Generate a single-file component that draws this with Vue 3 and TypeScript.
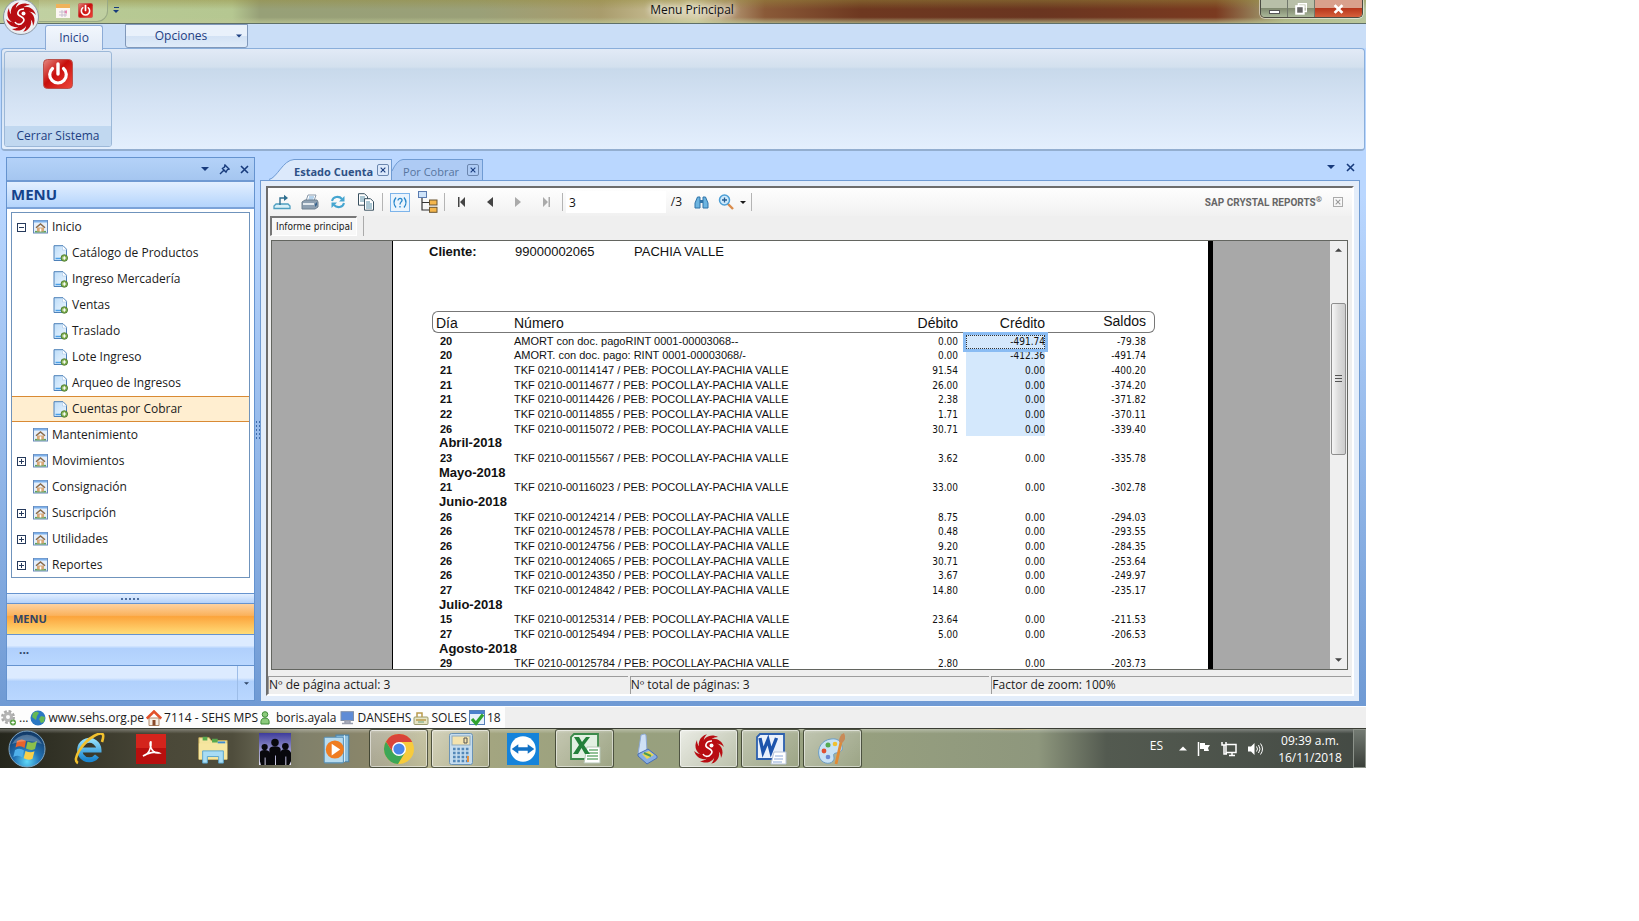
<script setup lang="ts">
import { ref } from 'vue'

interface TreeItem { label: string; child?: boolean; sign?: string; selected?: boolean }
interface Row { month?: string; day?: string; text?: string; debit?: string; credit?: string; balance?: string; sel?: boolean }

const pageNumber = ref('3')

const tree: TreeItem[] = [
  { label: 'Inicio', sign: 'minus' },
  { label: 'Catálogo de Productos', child: true },
  { label: 'Ingreso Mercadería', child: true },
  { label: 'Ventas', child: true },
  { label: 'Traslado', child: true },
  { label: 'Lote Ingreso', child: true },
  { label: 'Arqueo de Ingresos', child: true },
  { label: 'Cuentas por Cobrar', child: true, selected: true },
  { label: 'Mantenimiento' },
  { label: 'Movimientos', sign: 'plus' },
  { label: 'Consignación' },
  { label: 'Suscripción', sign: 'plus' },
  { label: 'Utilidades', sign: 'plus' },
  { label: 'Reportes', sign: 'plus' },
]

const tkf = (n: string) => `TKF 0210-${n} / PEB: POCOLLAY-PACHIA VALLE`
const entry = (day: string, text: string, debit: string, credit: string, balance: string, sel = false): Row =>
  ({ day, text, debit, credit, balance, sel })

const rows: Row[] = [
  entry('20', 'AMORT con doc. pagoRINT 0001-00003068--', '0.00', '-491.74', '-79.38', true),
  entry('20', 'AMORT. con doc. pago: RINT 0001-00003068/-', '0.00', '-412.36', '-491.74', true),
  entry('21', tkf('00114147'), '91.54', '0.00', '-400.20', true),
  entry('21', tkf('00114677'), '26.00', '0.00', '-374.20', true),
  entry('21', tkf('00114426'), '2.38', '0.00', '-371.82', true),
  entry('22', tkf('00114855'), '1.71', '0.00', '-370.11', true),
  entry('26', tkf('00115072'), '30.71', '0.00', '-339.40', true),
  { month: 'Abril-2018' },
  entry('23', tkf('00115567'), '3.62', '0.00', '-335.78'),
  { month: 'Mayo-2018' },
  entry('21', tkf('00116023'), '33.00', '0.00', '-302.78'),
  { month: 'Junio-2018' },
  entry('26', tkf('00124214'), '8.75', '0.00', '-294.03'),
  entry('26', tkf('00124578'), '0.48', '0.00', '-293.55'),
  entry('26', tkf('00124756'), '9.20', '0.00', '-284.35'),
  entry('26', tkf('00124065'), '30.71', '0.00', '-253.64'),
  entry('26', tkf('00124350'), '3.67', '0.00', '-249.97'),
  entry('27', tkf('00124842'), '14.80', '0.00', '-235.17'),
  { month: 'Julio-2018' },
  entry('15', tkf('00125314'), '23.64', '0.00', '-211.53'),
  entry('27', tkf('00125494'), '5.00', '0.00', '-206.53'),
  { month: 'Agosto-2018' },
  entry('29', tkf('00125784'), '2.80', '0.00', '-203.73'),
]

const tasks = [
  { id: 'ie', name: 'Internet Explorer' },
  { id: 'pdf', name: 'Adobe Reader' },
  { id: 'folder', name: 'Explorador' },
  { id: 'people', name: 'Usuarios' },
  { id: 'media', name: 'Reproductor' },
  { id: 'chrome', name: 'Chrome', open: true },
  { id: 'calc', name: 'Calculadora', open: true },
  { id: 'team', name: 'TeamViewer' },
  { id: 'excel', name: 'Excel', open: true },
  { id: 'scan', name: 'Escáner' },
  { id: 'swirl', name: 'Menu Principal', open: true, active: true },
  { id: 'word', name: 'Word', open: true },
  { id: 'paint', name: 'Paint', open: true },
]
</script>

<template>
  <svg class="defs" aria-hidden="true">
    <defs>
      <linearGradient id="gRed" x1="0" y1="0" x2="1" y2="1"><stop offset="0" stop-color="#e58a82" /><stop offset=".45" stop-color="#c80f0c" /><stop offset="1" stop-color="#f0483c" /></linearGradient>
      <radialGradient id="gOrb" cx=".5" cy=".85" r=".8"><stop offset="0" stop-color="#5fd8f8" /><stop offset=".45" stop-color="#2272b4" /><stop offset="1" stop-color="#123a68" /></radialGradient>
      <linearGradient id="gDoc" x1="0" y1="0" x2="1" y2="1"><stop offset="0" stop-color="#bcdcf8" /><stop offset="1" stop-color="#eef7ff" /></linearGradient>
      <linearGradient id="gIe" x1="0" y1="0" x2="0" y2="1"><stop offset="0" stop-color="#8fdcfa" /><stop offset="1" stop-color="#1b86cf" /></linearGradient>
      <linearGradient id="gSky" x1="0" y1="0" x2="0" y2="1"><stop offset="0" stop-color="#3e3c9c" /><stop offset="1" stop-color="#e6e4f6" /></linearGradient>
      <linearGradient id="gFold" x1="0" y1="0" x2="0" y2="1"><stop offset="0" stop-color="#f7e9a8" /><stop offset="1" stop-color="#e8cf72" /></linearGradient>
    </defs>
    <symbol id="swirl" viewBox="-16 -16 32 32">
      <g fill="#b80d12">
        <path v-for="a in [0, 45, 90, 135, 180, 225, 270, 315]" :key="a" :transform="`rotate(${a})`" d="M-7-4C-6-12 2-16 9-12C4-12 0-9 1-5z" />
        <circle r="6.500" />
      </g>
      <path d="M3-8C-3-8-5-3-1-1S5 3 0 7C-3 8-5 7-6 5" fill="none" stroke="#fff" stroke-width="1.600" />
      <circle cx="2.500" cy="-3.500" r="2" fill="#fff" />
    </symbol>
    <symbol id="power" viewBox="0 0 30 30">
      <rect x=".5" y=".5" width="29" height="29" rx="4" fill="url(#gRed)" stroke="#b9514c" />
      <path d="M9.500 9.500a8.300 8.300 0 1 0 11 0" fill="none" stroke="#fff" stroke-width="3.200" stroke-linecap="round" />
      <path d="M15 5v10" stroke="#fff" stroke-width="3.400" stroke-linecap="round" />
    </symbol>
    <symbol id="cal" viewBox="0 0 14 14"><rect width="14" height="14" fill="#fbf6f2" /><rect width="14" height="4" fill="#efb25b" /><path d="M3 8h8M3 11h8M6 6v7M9 6v7" stroke="#c9bfd0" /><path d="M8 8l3-2v4z" fill="#e38" opacity=".5" /></symbol>
    <symbol id="home" viewBox="0 0 15 14"><rect x=".5" y=".5" width="14" height="12.500" fill="#e6effa" stroke="#6688b8" /><path d="M1 1.500h13" stroke="#7db0ea" stroke-width="2" /><path d="M2 11.700h11" stroke="#5fa35f" stroke-width="1.600" /><path d="M4 7.500h7v4H4z" fill="#d9a878" /><path d="M3 7.800L7.500 4 12 7.800" fill="none" stroke="#8a6a4a" stroke-width="1.500" /><path d="M6.700 8.500h1.600v3H6.700z" fill="#fff" /></symbol>
    <symbol id="doc" viewBox="0 0 15 17"><path d="M1 .7h9l3.500 3.500V15.500H1z" fill="url(#gDoc)" stroke="#4d80b8" /><path d="M9.500 1v4h4" fill="#fff" stroke="#a9c8e8" stroke-width=".6" /><path d="M2.500 13.500h6" stroke="#4ba0e8" stroke-width="1.500" /><circle cx="11.300" cy="13" r="3.300" fill="#7fae4e" stroke="#48752a" stroke-width=".8" /><path d="M9.500 13h3.600M11.300 11.200v3.600" stroke="#fff" stroke-width="1.200" /></symbol>
    <symbol id="export" viewBox="0 0 18 16"><path d="M3 10h12l2 2v2.500H1V12z" fill="#d9f0f8" stroke="#4d9ec0" stroke-width="1.300" /><path d="M7 11V4h5" fill="none" stroke="#2f6f90" stroke-width="1.400" /><path d="M11 .8L15 4l-4 3z" fill="#2f6f90" /></symbol>
    <symbol id="print" viewBox="0 0 18 16"><path d="M5 7L7 1h8l-2 6z" fill="#fff" stroke="#8797a8" /><path d="M8 3h5M7.500 5h5" stroke="#6da6d8" /><path d="M1 8l3-2h12l1 2v5l-3 2H1z" fill="#8ea0b2" stroke="#6f8090" /><path d="M2 9h11v2H2z" fill="#e3e9ee" /><path d="M14 10l2-2v3l-2 2z" fill="#38648e" /></symbol>
    <symbol id="refresh" viewBox="0 0 16 14"><path d="M2 6C3 1.500 9 .5 12 4" fill="none" stroke="#45a5d0" stroke-width="2" /><path d="M14.500 1v5.500H9z" fill="#45a5d0" /><path d="M14 8c-1 4.500-7 5.500-10 2" fill="none" stroke="#45a5d0" stroke-width="2" /><path d="M1.500 13V7.500H7z" fill="#45a5d0" /></symbol>
    <symbol id="copy" viewBox="0 0 18 18"><path d="M1.500.7h6l3 3v8.500h-9z" fill="#fff" stroke="#39505f" /><path d="M3 4h5M3 6h6M3 8h6" stroke="#5b90a8" /><path d="M7.500 5.700h6l3 3v8.500h-9z" fill="#fff" stroke="#39505f" /><path d="M9 9h4M9 11h6M9 13h6M9 15h6" stroke="#5b90a8" /></symbol>
    <symbol id="param" viewBox="0 0 20 19"><rect x=".5" y=".5" width="19" height="18" fill="#eaf4fd" stroke="#7db4ea" /><path d="M6 4.500q-4 5 0 10M14 4.500q4 5 0 10M8 7.500C8 4.500 12.500 5 12 7.500 11.700 9 10 9 10 11.500M10 13v1.600" fill="none" stroke="#2787cc" stroke-width="1.300" /></symbol>
    <symbol id="group" viewBox="0 0 20 22"><path d="M4 7v12h8M4 11.500h8" fill="none" stroke="#333" stroke-width="1.200" /><rect x=".5" y=".5" width="8" height="6" fill="#cfe4fa" stroke="#5a7bb0" /><rect x="11.500" y="9" width="7.500" height="5" fill="#f5b64c" stroke="#6b5530" /><rect x="11.500" y="16.300" width="7.500" height="5" fill="#f5b64c" stroke="#6b5530" /></symbol>
    <symbol id="find" viewBox="0 0 15 13"><path d="M1 12V7L3.500 1H6v11zM9 12V1h2.500L14 7v5z" fill="#6cb4e0" stroke="#2f73a8" /><path d="M6 4h3v3H6z" fill="#2f73a8" /></symbol>
    <symbol id="zoom" viewBox="0 0 16 16"><path d="M9.500 9.500L15 15" stroke="#d98b4a" stroke-width="2.400" /><circle cx="6.500" cy="6" r="5" fill="#cfeafc" stroke="#4c9fd6" stroke-width="1.500" /><path d="M4 6h5M6.500 3.500v5" stroke="#265f94" stroke-width="1.300" /></symbol>
    <symbol id="pin" viewBox="0 0 11 11"><path d="M6 1l4 4-1.500.5L7 8 3.500 4.500 5.500 3zM1 10l4-4M3 4l4.500 4.500" fill="none" stroke="#183b7c" stroke-width="1.400" /></symbol>
    <symbol id="x" viewBox="0 0 9 9"><path d="M1 1l7 7M8 1L1 8" stroke="currentColor" stroke-width="1.600" /></symbol>
    <symbol id="down" viewBox="0 0 8 4"><path d="M0 0h8L4 4z" fill="currentColor" /></symbol>

    <symbol id="gear" viewBox="0 0 16 16"><circle cx="7" cy="7" r="5.500" fill="none" stroke="#a9a9a9" stroke-width="3" stroke-dasharray="2.600 1.700" /><circle cx="7" cy="7" r="3.500" fill="none" stroke="#b5b5b5" stroke-width="3" /><circle cx="12" cy="12.500" r="3" fill="#5ba245" /><path d="M10.300 12.500h3.400M12 10.800v3.400" stroke="#fff" /></symbol>
    <symbol id="globe" viewBox="0 0 16 16"><circle cx="8" cy="8" r="7.500" fill="#2a78c4" /><path d="M3 3q4-3 6 0l-2 3-1 4-4-3zM11 6l4 1-1 5-3 1-2-4z" fill="#65b854" /></symbol>
    <symbol id="house" viewBox="0 0 16 16"><path d="M3 8h10v7.500H3z" fill="#f6efe6" stroke="#b08868" /><path d="M.8 8.500L8 1.500l7.200 7" fill="none" stroke="#e2502a" stroke-width="2.600" /><path d="M6.500 10h3v5.500h-3z" fill="#8a4b2b" /></symbol>
    <symbol id="user" viewBox="0 0 10 14"><circle cx="5" cy="3.500" r="2.800" fill="#8ccb7c" stroke="#3f8a36" /><path d="M1 13q-1-6 4-6t4 6z" fill="#8ccb7c" stroke="#3f8a36" /></symbol>
    <symbol id="pc" viewBox="0 0 15 14"><rect x="1" y=".7" width="12.500" height="8.800" fill="#5f8cd6" stroke="#8090a8" /><path d="M5 10h5v2H5zM2 12.500h11" stroke="#9a9fae" fill="#c8ccd6" stroke-width="1.500" /></symbol>
    <symbol id="cash" viewBox="0 0 16 14"><rect x="1" y="6" width="14" height="7.500" rx="1" fill="#e6e5c4" stroke="#9b9a6c" /><path d="M4 6V2h5v4M3 9h10" fill="none" stroke="#b99b4c" stroke-width="1.500" /><path d="M5 11h6" stroke="#6ca07c" /></symbol>
    <symbol id="date" viewBox="0 0 16 16"><rect x=".5" y=".5" width="15" height="14" fill="#e6f0fb" stroke="#5580b8" /><path d="M1 2.500h14" stroke="#4a80cc" stroke-width="3" /><path d="M3 9l4 4.500 7-9" fill="none" stroke="#2fa32f" stroke-width="3.200" /></symbol>

    <symbol id="orb" viewBox="0 0 38 38"><circle cx="19" cy="19" r="18" fill="url(#gOrb)" stroke="#7fa6c4" /><path d="M9 11q5-3 9 0l-1.500 7q-4-3-9-.5z" fill="#e8632c" /><path d="M19.500 11.500q5 2.500 9.500-.5l-2 8q-4 2-9-.5z" fill="#8cc04b" /><path d="M7 20q5-2.500 9 .5l-1.700 7q-4-3-9-.5z" fill="#4fb0ea" /><path d="M17.500 21q5 2.500 9 .3l-2 7.500q-4 2-8.800-.6z" fill="#f8d04a" /><path d="M4 14a16 14 0 0 1 30 0q-15-6-30 0" fill="#fff" opacity=".25" /></symbol>
    <symbol id="ie" viewBox="0 0 32 32"><path d="M6.500 17h19.500a9.700 9.700 0 1 0-2 6" fill="none" stroke="url(#gIe)" stroke-width="5" /><path d="M5 30C-2 27 10 9 21 3s10 0 8 6" fill="none" stroke="#f2c12e" stroke-width="2.600" /></symbol>
    <symbol id="pdf" viewBox="0 0 32 32"><rect x="1" y="1" width="30" height="30" fill="#b80f0e" /><rect x="1" y="1" width="30" height="14" fill="#d4241c" /><path d="M8 23c5-1 9-8 8-14-2-1-1 12 8 11-4-2-11 0-16 3z" fill="none" stroke="#fff" stroke-width="1.600" /></symbol>
    <symbol id="folder" viewBox="0 0 34 32"><path d="M2 4h11l2 3h17v20H2z" fill="url(#gFold)" stroke="#c9ad58" /><path d="M6 3h5v4H6zM16 5h6v4h-6z" fill="#58a94e" /><path d="M22 8h8v3h-8z" fill="#3d8ad0" /><path d="M2 10h30v17H2z" fill="#f6e6a0" /><path d="M6 31V18h22v13h-5v-7H11v7z" fill="#a8dcf4" stroke="#5aa4cc" /></symbol>
    <symbol id="people" viewBox="0 0 34 34"><rect width="34" height="34" fill="url(#gSky)" /><g fill="#08080c"><circle cx="6" cy="15" r="3.300" /><circle cx="17" cy="10" r="4" /><circle cx="28" cy="14" r="3.500" /><path d="M1 30V21q0-3 5-3t5 3v13H7v-8H6v8H2zM11 34V17q1-3 6-3t6 3v17h-5V24h-1v10zM23 34V20q1-3 5-3t6 4v9l-2 4h-3v-9h-1v9z" /></g></symbol>
    <symbol id="media" viewBox="0 0 30 30"><path d="M14 2h12v25H14z" fill="#8fc0de" stroke="#4b84ac" /><path d="M22 2v25" stroke="#d8eefa" /><rect x="3" y="4" width="18" height="24" rx="1" fill="#b7dbef" stroke="#5a93ba" /><circle cx="13" cy="15.500" r="8.500" fill="#ef7d22" /><path d="M10 10l8 5.500-8 5.500z" fill="#fff" /></symbol>
    <symbol id="chrome" viewBox="0 0 32 32"><circle cx="16" cy="16" r="15" fill="#f7cb3c" /><path d="M16 16l-6 3.500L3 8.500A15 15 0 0 0 15 31l7-11.500z" fill="#3da657" /><path d="M16 16L10 19.500 3 8.500A15 15 0 0 1 29.200 9H16z" fill="#d9443a" /><circle cx="16" cy="16" r="7" fill="#fff" /><circle cx="16" cy="16" r="5.600" fill="#4a86e8" /></symbol>
    <symbol id="calc" viewBox="0 0 24 32"><rect x=".5" y=".5" width="23" height="31" rx="2" fill="#c5dcee" stroke="#6a93b6" /><rect x="3" y="3" width="18" height="9" fill="#f4e3ae" stroke="#8ea9bd" /><path d="M15 5h3v5h-3z" fill="none" stroke="#555" /><path d="M4 16h16M4 20h16M4 24h16M4 28h16" stroke="#5488b8" stroke-width="2.400" stroke-dasharray="2.600 1.700" /><path d="M18 23h2v6h-2z" fill="#e59140" /></symbol>
    <symbol id="team" viewBox="0 0 34 34"><rect width="34" height="34" fill="#1583da" /><circle cx="17" cy="17" r="13.500" fill="#fff" /><path d="M5 17l7-5v3.200h10V12l7 5-7 5v-3.200H12V22z" fill="#1272c6" /></symbol>
    <symbol id="excel" viewBox="0 0 32 32"><path d="M5 1h24v25H2V4z" fill="#e2f0e2" stroke="#3c8a4a" stroke-width="1.800" /><path d="M18 14h13v16H15z" fill="#fff" stroke="#b8c8b8" /><path d="M20 17h9M19 20h10M18 23h11M18 26h11" stroke="#6fae78" stroke-width="1.300" /><path d="M5 4h5l3 5 4-5h4l-6 8 6 9h-5l-3.500-6L9 21H4l6-9z" fill="#23803a" /></symbol>
    <symbol id="scan" viewBox="0 0 30 32"><path d="M9 2q4-2 5 0l1 16-9 3z" fill="#cfe0f6" stroke="#8da9d4" /><path d="M6 21l10-5 9 7v2l-10 6-9-8z" fill="#88aee4" stroke="#4a70b4" /><path d="M10 21l7-3 5 4-7 4z" fill="#e8d558" /><path d="M12 20l7 3" stroke="#4a9c50" stroke-width="2" /></symbol>
    <symbol id="word" viewBox="0 0 32 32"><path d="M5 1h24v25H2V4z" fill="#eaf1fb" stroke="#2c5fae" stroke-width="1.800" /><path d="M19 19h12v12H16z" fill="#fff" stroke="#b8c4d8" /><path d="M20 23h8M19 26h9M18 29h9" stroke="#8aa8d8" /><path d="M5 5l3 14 5-12 3 12 5.500-14" fill="none" stroke="#1d54ac" stroke-width="3.400" /></symbol>
    <symbol id="paint" viewBox="0 0 32 32"><path d="M14 6C5 7 0 15 2 23s11 9 14 5-2-7 3-8 7-2 6-7-5-8-11-7z" fill="#c9e2f4" stroke="#6c9dc4" /><circle cx="11" cy="12" r="2.500" fill="#55aa50" /><circle cx="18" cy="11" r="2.300" fill="#f0c030" /><circle cx="7" cy="18" r="2.400" fill="#e05030" /><circle cx="11" cy="24" r="2.300" fill="#6a88d0" /><path d="M19 31l5-22" stroke="#e08a36" stroke-width="2.800" /><path d="M22 9q0-7 5-9 3 6-2 10z" fill="#c88a58" /></symbol>
    <symbol id="flag" viewBox="0 0 14 16"><path d="M1.500 1v14" stroke="#fff" stroke-width="1.500" /><path d="M3 2h5v2h5l-2 3 1 3H7V8H3z" fill="#fff" /></symbol>
    <symbol id="net" viewBox="0 0 16 16"><path d="M5 3.500h10v8H5zM8 14.500h6M11 11.500v3M1 1v3h4V1M3 4v9h3" fill="none" stroke="#fff" stroke-width="1.500" /></symbol>
    <symbol id="sound" viewBox="0 0 16 16"><path d="M1 5.500h3L7.500 2v12L4 10.500H1z" fill="#fff" /><path d="M9.500 5.500q2 2.500 0 5M11.500 4q3 4 0 8M13.500 2.500q4 5.500 0 11" fill="none" stroke="#fff" /></symbol>
  </svg>

  <div class="page">
    <div class="window">
      <header class="titlebar">
        <button class="appbtn" aria-label="Menú de aplicación"><svg width="32" height="32"><use href="#swirl" /></svg></button>
        <div class="quick">
          <button aria-label="Calendario"><svg width="14" height="14"><use href="#cal" /></svg></button>
          <button aria-label="Salir"><svg width="15" height="15"><use href="#power" /></svg></button>
        </div>
        <button class="more" aria-label="Personalizar"><i></i><svg width="6" height="3"><use href="#down" /></svg></button>
        <h1>Menu Principal</h1>
        <div class="winbtns">
          <button aria-label="Minimizar"><i class="min"></i></button>
          <button aria-label="Restaurar"><svg width="12" height="12" viewBox="0 0 12 12"><path d="M3.500 3V.7h7.800v7.800H9" fill="none" stroke="#fff" stroke-width="1.500" /><rect x="1.200" y="3.200" width="7.500" height="7.500" fill="#666" stroke="#fff" stroke-width="2" /></svg></button>
          <button class="close" aria-label="Cerrar"><svg width="11" height="10" viewBox="0 0 9 9"><path d="M1 1l7 7M8 1L1 8" stroke="#fff" stroke-width="2.500" /></svg></button>
        </div>
      </header>

      <nav class="tabrow">
        <button class="rtab">Inicio</button>
        <button class="options"><span>Opciones</span><svg width="6" height="4"><use href="#down" /></svg></button>
      </nav>
      <section class="ribbon">
        <button class="group"><span class="gicon"><svg width="30" height="30"><use href="#power" /></svg></span><span class="glabel">Cerrar Sistema</span></button>
      </section>

      <main class="body">
        <aside class="side">
          <div class="shead">
            <button aria-label="Opciones de panel"><svg width="8" height="4"><use href="#down" /></svg></button>
            <button aria-label="Fijar"><svg width="11" height="11"><use href="#pin" /></svg></button>
            <button aria-label="Cerrar panel"><svg width="9" height="9"><use href="#x" /></svg></button>
          </div>
          <h2>MENU</h2>
          <ul class="tree">
            <li v-for="t in tree" :key="t.label" :class="{ child: t.child, selected: t.selected }">
              <span class="sign"><svg v-if="t.sign" width="9" height="9" viewBox="0 0 9 9"><rect x=".5" y=".5" width="8" height="8" fill="#fff" stroke="#263a5c" /><path :d="t.sign === 'plus' ? 'M2 4.500h5M4.500 2v5' : 'M2 4.500h5'" stroke="#263a5c" /></svg></span>
              <svg v-if="t.child" width="15" height="17"><use href="#doc" /></svg>
              <svg v-else width="15" height="14"><use href="#home" /></svg>
              <button>{{ t.label }}</button>
            </li>
          </ul>
          <div class="split"><i></i></div>
          <button class="nav hot">MENU</button>
          <button class="nav dots">...</button>
          <div class="nav last"><button aria-label="Más"><svg width="5" height="3"><use href="#down" /></svg></button></div>
        </aside>
        <div class="grip"></div>

        <section class="docs">
          <div class="dtabs">
            <div class="dtab on"><svg class="slope" width="25" height="21" viewBox="0 0 25 21"><path d="M0 21C8 19 14 1 25 .5V21z" fill="#dce9fb" /><path d="M0 20.500C8 19 14 1 25 .5" fill="none" stroke="#6f9bd3" /></svg><button>Estado Cuenta</button><button class="tx" aria-label="Cerrar Estado Cuenta"><svg width="7" height="7"><use href="#x" /></svg></button></div>
            <div class="dtab"><svg class="slope" width="11" height="21" viewBox="0 0 11 21"><path d="M0 12Q5 1 11 .5V21H0z" fill="#aecbf4" /><path d="M0 12Q5 1 11 .5" fill="none" stroke="#6f9bd3" /></svg><button>Por Cobrar</button><button class="tx" aria-label="Cerrar Por Cobrar"><svg width="7" height="7"><use href="#x" /></svg></button></div>
            <span class="fill"></span>
            <button class="dt" aria-label="Lista de pestañas"><svg width="8" height="4"><use href="#down" /></svg></button>
            <button class="dt" aria-label="Cerrar pestaña"><svg width="9" height="9"><use href="#x" /></svg></button>
          </div>
          <div class="panel">
            <div class="viewer">
              <div class="tools">
                <button aria-label="Exportar"><svg width="18" height="16"><use href="#export" /></svg></button>
                <button aria-label="Imprimir"><svg width="18" height="16"><use href="#print" /></svg></button>
                <button aria-label="Actualizar"><svg width="16" height="14"><use href="#refresh" /></svg></button>
                <button aria-label="Copiar"><svg width="18" height="18"><use href="#copy" /></svg></button>
                <i class="sep"></i>
                <button aria-label="Parámetros"><svg width="20" height="19"><use href="#param" /></svg></button>
                <button aria-label="Árbol de grupos"><svg width="20" height="22"><use href="#group" /></svg></button>
                <i class="sep"></i>
                <button aria-label="Primera página"><svg width="8" height="10" viewBox="0 0 8 10"><path d="M0 0h1.500v10H0zM7 0v10L2 5z" fill="#444" /></svg></button>
                <button aria-label="Página anterior"><svg width="6" height="10" viewBox="0 0 6 10"><path d="M6 0v10L0 5z" fill="#444" /></svg></button>
                <button aria-label="Página siguiente"><svg width="6" height="10" viewBox="0 0 6 10"><path d="M0 0v10l6-5z" fill="#aaa" /></svg></button>
                <button aria-label="Última página"><svg width="8" height="10" viewBox="0 0 8 10"><path d="M8 0H6.500v10H8zM1 0v10l5-5z" fill="#aaa" /></svg></button>
                <i class="sep"></i>
                <input v-model="pageNumber" type="text" aria-label="Página" />
                <span class="total">/3</span>
                <button class="finder" aria-label="Buscar"><svg width="15" height="13"><use href="#find" /></svg></button>
                <button class="zoomer" aria-label="Zoom"><svg width="16" height="16"><use href="#zoom" /></svg><svg width="6" height="3"><use href="#down" /></svg></button>
                <i class="sep"></i>
                <span class="brand">SAP CRYSTAL REPORTS<sup>®</sup></span>
                <button class="bx" aria-label="Cerrar informe"><svg width="6" height="6"><use href="#x" /></svg></button>
              </div>
              <div class="subtab"><button>Informe principal</button><i></i></div>
              <div class="canvas">
                <div class="sheet">
                  <div class="client"><b>Cliente:</b><span class="code">99000002065</span><span>PACHIA VALLE</span></div>
                  <table>
                    <colgroup><col class="c1" /><col /><col class="c3" /><col class="c4" /><col class="c5" /></colgroup>
                    <thead><tr><th>Día</th><th>Número</th><th>Débito</th><th>Crédito</th><th>Saldos</th></tr></thead>
                    <tbody>
                      <tr v-for="(r, i) in rows" :key="i">
                        <td v-if="r.month" class="month" colspan="5">{{ r.month }}</td>
                        <template v-else>
                          <td class="day">{{ r.day }}</td>
                          <td>{{ r.text }}</td>
                          <td class="num">{{ r.debit }}</td>
                          <td class="num" :class="{ sel: r.sel }">{{ r.credit }}<span v-if="i === 0" class="focus"></span></td>
                          <td class="num">{{ r.balance }}</td>
                        </template>
                      </tr>
                    </tbody>
                  </table>
                </div>
                <div class="vscroll"><svg width="7" height="4" viewBox="0 0 8 4"><path d="M0 4h8L4 0z" fill="#444" /></svg><div class="thumb"><i></i></div><svg width="7" height="4"><use href="#down" /></svg></div>
              </div>
              <footer class="vstatus"><span>Nº de página actual: 3</span><span>Nº total de páginas: 3</span><span>Factor de zoom: 100%</span></footer>
            </div>
          </div>
        </section>
      </main>

      <footer class="status">
        <div>
          <svg width="16" height="16"><use href="#gear" /></svg><span>...</span>
          <svg width="16" height="16"><use href="#globe" /></svg><a href="#">www.sehs.org.pe</a>
          <svg width="16" height="16"><use href="#house" /></svg><span>7114 - SEHS MPS</span>
          <svg width="10" height="14"><use href="#user" /></svg><span class="user">boris.ayala</span>
          <svg width="15" height="14"><use href="#pc" /></svg><span>DANSEHS</span>
          <svg width="16" height="14"><use href="#cash" /></svg><span>SOLES</span>
          <svg width="16" height="16"><use href="#date" /></svg><span>18</span>
        </div>
      </footer>

      <footer class="taskbar">
        <button class="start" aria-label="Inicio de Windows"><svg width="38" height="38"><use href="#orb" /></svg></button>
        <button v-for="t in tasks" :key="t.id" class="task" :class="{ open: t.open, active: t.active }" :aria-label="t.name"><svg width="32" height="32"><use :href="'#' + t.id" /></svg></button>
        <span class="fill"></span>
        <span class="lang">ES</span>
        <svg width="8" height="5" viewBox="0 0 8 4"><path d="M0 4h8L4 0z" fill="#fff" /></svg>
        <svg width="14" height="16"><use href="#flag" /></svg>
        <svg width="16" height="16"><use href="#net" /></svg>
        <svg width="16" height="16"><use href="#sound" /></svg>
        <time><span>09:39 a.m.</span><span>16/11/2018</span></time>
        <button class="peek" aria-label="Mostrar escritorio"></button>
      </footer>
    </div>
  </div>
</template>

<style>
body { margin: 0; background: #fff; }
</style>

<style scoped>
* { box-sizing: border-box; }
button { border: 0; padding: 0; margin: 0; background: none; font: inherit; color: inherit; }
svg { display: block; flex: none; }
.defs { position: absolute; width: 0; height: 0; }
.fill { flex: 1; }
.page { height: 100vh; padding: 0 273px 153px 0; font: 12px/16px "Open Sans", "Noto Sans", sans-serif; color: #1a1a1a; }
.window { height: 100%; display: flex; flex-direction: column; background: #bad7ff; }

.titlebar { position: relative; z-index: 2; display: flex; height: 24px; flex: none; border-bottom: 1px solid #5f7068;
  background: linear-gradient(180deg, rgba(150,140,60,.45), transparent 40%, transparent 75%, rgba(190,200,150,.7)),
  linear-gradient(90deg, #b9cb96 0, #b5c791 17%, #97a077 19%, #9aa078 35%, #a99c6c 44%, #d8cfa8 51%, #8a5a38 56%, #6e3820 63%, #6a3520 76%, #7a3a20 89%, #a8b080 94%, #b4c4a0 100%); }
.appbtn { width: 36px; height: 36px; margin: -1px 0 0 3px; border-radius: 50%; background: radial-gradient(#fff 40%, #cfd6de); border: 1px solid #8b97a4; display: grid; place-items: center; flex: none; }
.quick { width: 69px; height: 22px; display: flex; gap: 8px; padding-left: 3px; align-items: center; justify-content: center; border: 1px solid #99a985; border-width: 0 1px 1px 0; border-radius: 0 0 11px 0; background: rgba(255,255,255,.12); }
.more { width: 16px; color: #183b7c; display: flex; flex-direction: column; gap: 2px; align-items: center; justify-content: center; height: 20px; }
.more i { width: 5px; height: 1px; background: #183b7c; }
h1 { flex: 1; margin: 0; font: 12px/20px "Open Sans", sans-serif; text-align: center; color: #111; text-shadow: 0 0 6px #fff, 0 0 8px #fff; }
.winbtns { display: flex; width: 103px; height: 18px; margin-right: 3px; border: 1px solid #4b4b42; border-top: 0; border-radius: 0 0 5px 5px; overflow: hidden; box-shadow: 0 0 0 1px rgba(255,255,255,.5); }
.winbtns button { width: 27px; display: grid; place-items: center; border-right: 1px solid #71786c; background: linear-gradient(#b8bfa8 45%, #818a70 50%, #aab89a); }
.winbtns .close { flex: 1; border: 0; background: linear-gradient(#d9a08c 45%, #b8371c 50%, #d6603c); }
.min { width: 11px; height: 4px; background: #fff; border: 1px solid #555; margin-top: 6px; }

.tabrow { display: flex; height: 24px; flex: none; padding-left: 45px; background: #cadef7; color: #1e4082; }
.rtab { z-index: 1; width: 58px; height: 25px; margin-top: 1px; border: 1px solid #8cabd6; border-bottom: 0; border-radius: 3px 3px 0 0; background: linear-gradient(#f2f7fd, #e3ebf6); }
.options { width: 123px; height: 24px; margin-left: 22px; display: flex; align-items: center; border: 1px solid #8098ba; border-radius: 0 0 3px 3px; background: linear-gradient(#e9f1fb 50%, #d3e2f4 50%, #dfebf9); }
.options span { flex: 1; padding-bottom: 1px; } .options svg { margin-right: 5px; }
.ribbon { height: 103px; flex: none; margin: 0 1px; border: 1px solid #8aaeda; border-bottom: 2px solid #93aed0; border-radius: 4px; padding: 2px; background: linear-gradient(#e2eaf6 0, #d3e0ee 18%, #c8d9eb 20%, #d5e3f4 55%, #e4effd 100%); }
.group { width: 108px; height: 96px; border: 1px solid #9cb8d8; border-radius: 3px; display: flex; flex-direction: column; overflow: hidden; color: #1e4082; }
.gicon { flex: 1; width: 100%; display: flex; justify-content: center; padding-top: 7px; }
.glabel { width: 100%; height: 20px; line-height: 19px; background: #c1d8f0; }

.body { flex: 1; min-height: 0; display: flex; padding: 6px 6px 5px 6px; background: linear-gradient(#bad7ff, #bad7ff 8%, #6f9ad4); }
.side { width: 249px; flex: none; display: flex; flex-direction: column; border: 1px solid #6593cf; background: #fff; }
.shead { height: 24px; display: flex; align-items: center; justify-content: flex-end; gap: 10px; padding-right: 5px; color: #183b7c; background: linear-gradient(#b4d2f8, #a5c6f0); border-bottom: 2px solid #6f99d2; flex: none; }
h2 { margin: 0; height: 27px; flex: none; padding-left: 4px; font: 700 15px/24px "Open Sans", sans-serif; color: #15428b; background: linear-gradient(#e3efff, #b4d4fc); border-bottom: 2px solid #7ba2d8; }
.tree { list-style: none; margin: 3px 4px 0; padding: 1px 0; flex: none; border: 1px solid #6f93bc; height: 366px; }
.tree li { height: 26px; display: flex; align-items: center; gap: 4px; }
.tree li.child { padding-left: 20px; }
.tree .sign { width: 17px; padding-left: 5px; }
.tree .selected { background: #ffeed0; border: 1px solid #d98a34; border-width: 1px 0; }
.tree button { line-height: 24px; }
.split { margin-top: auto; height: 10px; flex: none; border-top: 1px solid #6593cf; background: linear-gradient(#e3efff, #b4d2fb); display: grid; place-items: center; }
.split i { width: 19px; height: 2px; background: repeating-linear-gradient(90deg, #4f6f9e 0 2px, transparent 2px 4px); }
.nav { flex: none; height: 31px; border-top: 1px solid #6593cf; text-align: left; padding-left: 6px; font-weight: 700; color: #2f4566; background: linear-gradient(#dcebff 35%, #b0d0fc 45%, #b9d7ff); }
.nav.hot { background: linear-gradient(#fdd2a0 0, #fbb25c 38%, #fca43c 42%, #ffdc78); font-size: 11px; }
.nav.dots { padding-left: 12px; }
.nav.last { height: 35px; display: flex; justify-content: flex-end; }
.nav.last button { width: 17px; border-left: 1px solid #9dbde8; display: grid; place-items: center; }
.grip { width: 5px; height: 19px; align-self: center; background: radial-gradient(#3f6cab 1px, transparent 1px) 0 0 / 3px 4px; }

.docs { flex: 1; min-width: 0; display: flex; flex-direction: column; }
.dtabs { display: flex; height: 23px; flex: none; align-items: flex-end; color: #183b7c; }
.dtab { display: flex; height: 21px; line-height: 24px; font-size: 11px; color: #56759f; }
.dtab > button:first-of-type { border-top: 1px solid #6f9bd3; background: #aecbf4; padding-right: 8px; }
.dtab.on { margin-left: 9px; font-weight: 700; color: #2e5186; }
.dtab.on > button:first-of-type { background: #dce9fb; padding: 0 4px 0 0; }
.dtab .tx { border-top: 1px solid #6f9bd3; border-right: 1px solid #6f9bd3; background: #aecbf4; padding-right: 3px; display: grid; place-items: center; color: #183b7c; }
.dtab.on .tx { background: #dce9fb; padding-right: 2px; }
.tx svg { border: 1px solid #6b86ae; border-radius: 2px; width: 12px; height: 12px; padding: 2px; }
.dt { height: 16px; margin-left: 11px; display: grid; place-items: center; margin-bottom: 5px; }
.dt:last-child { margin-right: 5px; }
.panel { flex: 1; min-height: 0; padding: 5px; border: 1px solid #6f9bd3; border-bottom: 0; background: #e3edfa; }
.viewer { height: 100%; display: flex; flex-direction: column; border: 2px solid #6d6d6d; border-right: 2px solid #fff; border-bottom: 2px solid #fff; background: #efefef; }
.tools { height: 28px; flex: none; display: flex; align-items: center; background: linear-gradient(#fefefe, #f1f1f1); }
.tools > button { width: 28px; display: grid; place-items: center; }
.sep { width: 1px; height: 18px; background: #b4b4b4; margin: 0 3px 0 2px; }
.tools input { width: 100px; height: 22px; border: 0; background: #fff; padding: 0 3px; font: inherit; color: #111; }
.total { width: 22px; text-align: right; padding-right: 6px; }
.tools .finder { width: 26px; }
.tools .zoomer { display: flex; align-items: center; gap: 6px; padding-left: 4px; width: 35px; }
.brand { margin-left: auto; font: 700 10px/14px Roboto, "Liberation Sans", sans-serif; color: #666; padding-top: 3px; }
.brand sup { font-size: 8px; line-height: 8px; }
.tools .bx { width: 10px; height: 10px; margin: 0 9px 0 11px; border: 1px solid #aaa; color: #999; }
.subtab { height: 24px; flex: none; padding-left: 2px; display: flex; align-items: flex-start; }
.subtab button { height: 20px; padding: 0 4px; border: 1px solid #777; border-width: 2px 1px 1px 2px; border-right-color: #fff; border-bottom-color: #fff; background: #f8f8f8; font: 11px/16px "DejaVu Sans Condensed", "DejaVu Sans", sans-serif; font-size: 10px; }
.subtab i { width: 1px; height: 20px; margin-left: 6px; background: #aaa; }
.canvas { flex: 1; min-height: 0; margin: 0 4px 0 3px; display: flex; border: 1px solid #636560; background: #a8a8a8; overflow: hidden; }
.sheet { flex: 1; margin: 0 117px 0 120px; border-left: 1px solid #000; border-right: 5px solid #000; background: #fff; overflow: hidden; padding: 3px 53px 0 39px; font-family: "Liberation Sans", Arial, sans-serif; color: #111; }
.client { display: flex; font-size: 13px; line-height: 16px; padding: 0 0 51px; margin-left: -3px; }
.client b { width: 86px; } .client .code { width: 119px; }
table { width: 100%; table-layout: fixed; border-collapse: separate; border-spacing: 0; }
.c1 { width: 82px; } .c3 { width: 100px; } .c4 { width: 79px; } .c5 { width: 110px; }
th { height: 22px; padding: 2px 0 0; border: 1px solid #777; border-width: 1px 0; font-weight: 400; font-size: 14px; line-height: 16px; text-align: right; }
th:first-child { border-left-width: 1px; border-radius: 6px 0 0 6px; padding-left: 3px; text-align: left; }
th:nth-child(2) { text-align: left; }
th:nth-child(3) { padding-right: 8px; }
th:last-child { border-right-width: 1px; border-radius: 0 6px 6px 0; padding: 0 8px 2px 0; }
tbody tr { height: 15px; }
tbody tr:nth-child(3n+2) { height: 14px; }
td { padding: 0; font-size: 11px; line-height: 14px; white-space: nowrap; }
.day { padding-left: 8px; font-weight: 700; }
.month { padding-left: 7px; font-weight: 700; font-size: 13px; }
.num { font: 10px/13px "DejaVu Sans Condensed", "DejaVu Sans", sans-serif; text-align: right; padding-top: 1px; position: relative; }
.num:nth-child(3) { padding-right: 8px; }
.num:last-child { padding-right: 9px; }
.sel { background: #d4e8fc; }
.focus { position: absolute; z-index: 1; inset: -1px -3px -4px; border: 3px solid #8abcf3; outline: 1px dotted #333; outline-offset: -4px; }
.vscroll { width: 17px; display: flex; flex-direction: column; align-items: center; background: #efefef; padding: 7px 0; color: #444; }
.thumb { width: 15px; height: 152px; margin: 51px 0 auto; border: 1px solid #8e8e8e; border-radius: 2px; background: linear-gradient(90deg, #f6f6f6, #dcdcdc 50%, #cdcdcd); display: grid; place-items: center; }
.thumb i { width: 7px; height: 9px; background: repeating-linear-gradient(#555 0 1px, transparent 1px 3px); }
.vstatus { height: 24px; flex: none; display: flex; gap: 2px; padding: 6px 1px 0 0; }
.vstatus span { flex: 1; height: 18px; line-height: 16px; border-top: 1px solid #9c9c9c; border-left: 1px solid #9c9c9c; }

.status { height: 22px; flex: none; background: #efefef; border-top: 1px solid #fff; }
.status div { width: max-content; height: 21px; background: #fdfdfd; display: flex; align-items: center; gap: 2px; padding: 0 4px 0 1px; }
.status a { color: inherit; text-decoration: none; }
.user { padding: 0 2px 0 4px; }
.taskbar { height: 40px; flex: none; display: flex; align-items: center; gap: 3px; border-top: 1px solid #3a3d34; color: #fff;
  background: linear-gradient(rgba(255,255,255,.3), transparent 12%),
  radial-gradient(ellipse at 1010px 0, rgba(120,96,36,.9) 0, rgba(190,176,110,.7) 22px, transparent 44px),
  linear-gradient(90deg, #25261c 0, #4a4838 12%, #4f4d3c 17%, #80806a 22%, #8a866a 27%, #b9b690 31%, #a3a580 36%, #98a07e 45%, #97a07f 62%, #8e977d 76%, #535a50 81%, #444a44 100%); }
.start { width: 56px; display: grid; place-items: center; padding-right: 3px; }
.task { width: 59px; height: 39px; display: grid; place-items: center; border-radius: 3px; flex: none; }
.open { border: 1px solid rgba(40,45,30,.75); box-shadow: inset 0 0 0 1px rgba(255,255,255,.5); background: linear-gradient(135deg, rgba(255,255,255,.4), rgba(255,255,255,.05)); }
.active { background: linear-gradient(135deg, rgba(255,255,255,.8), rgba(255,255,255,.35)); }
.taskbar > svg { margin-right: 7px; }
.lang { margin-right: 13px; padding-bottom: 6px; }
time { width: 70px; margin: 0 5px 0 2px; display: flex; flex-direction: column; align-items: center; line-height: 17px; }
.peek { width: 13px; height: 39px; border: 1px solid #8c928a; background: linear-gradient(#737a72, #3a3f3a); }
</style>
